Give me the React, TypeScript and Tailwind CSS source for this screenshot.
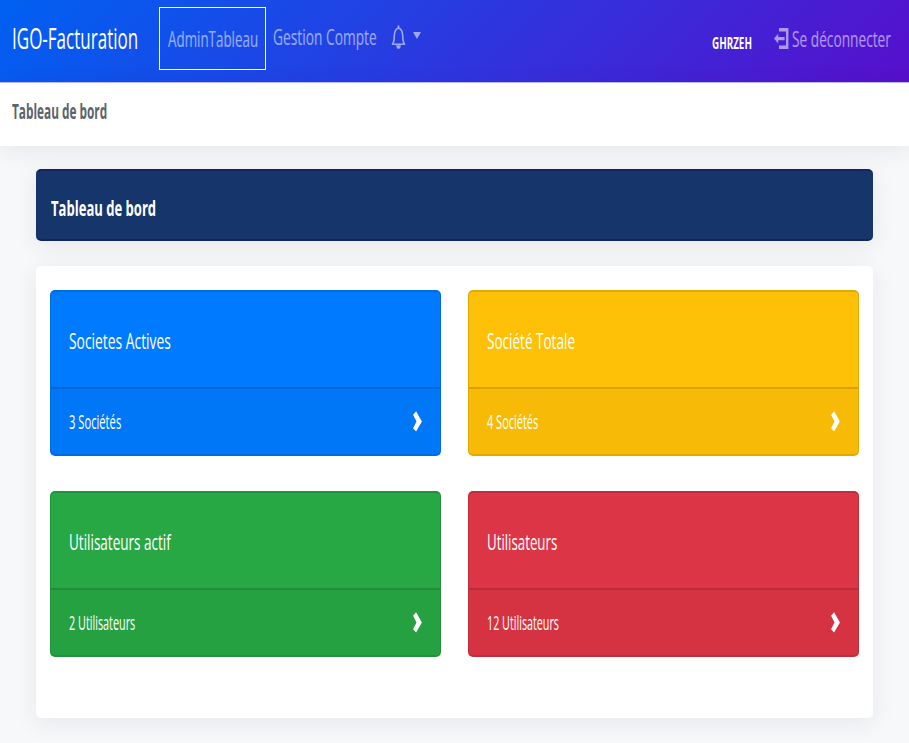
import { useLayoutEffect, useRef, type ReactNode } from 'react';

/* Single-line label whose glyphs are condensed to the width of its box. */
function Label({ className, children }: { className: string; children: ReactNode }) {
  const box = useRef<HTMLSpanElement>(null);
  const text = useRef<HTMLSpanElement>(null);

  useLayoutEffect(() => {
    if (!box.current || !text.current) return;
    const ratio = box.current.clientWidth / text.current.offsetWidth;
    text.current.style.transform = `scaleX(${ratio})`;
  }, [children]);

  return (
    <span ref={box} className={`block shrink-0 whitespace-nowrap leading-none ${className}`}>
      <span ref={text} className="inline-block origin-left align-top">
        {children}
      </span>
    </span>
  );
}

function BellIcon() {
  return (
    <svg className="ml-[14px] mt-[25px] h-6 w-[15px] shrink-0" viewBox="0 0 15 24" fill="none">
      <path
        d="M1.4 19.2C3.3 17.2 3.1 14.5 3.3 10.5C3.5 6.2 5 3.6 7.5 3.2C10 3.6 11.5 6.2 11.7 10.5C11.9 14.5 11.7 17.2 13.6 19.2Z"
        stroke="currentColor"
        strokeWidth="1.6"
        strokeLinejoin="round"
      />
      <path d="M7.5 0.5V3" stroke="currentColor" strokeWidth="1.8" />
      <path d="M5.2 20.2H9.8C9.6 22.7 8.8 23.8 7.5 23.8C6.2 23.8 5.4 22.7 5.2 20.2Z" fill="currentColor" />
    </svg>
  );
}

function LogoutIcon() {
  return (
    <svg className="mt-[27px] h-[22px] w-[15px] shrink-0" viewBox="0 0 15 22" fill="currentColor">
      <path d="M5 1H14.4V22H5V18.6H12V4.4H5Z" />
      <path d="M0 11.6L4.2 6.8V10H10.6V13.2H4.2V16.4Z" />
    </svg>
  );
}

function Chevron() {
  return (
    <svg className="mt-[22px] h-[21px] w-[9px] shrink-0" viewBox="0 0 9 21" fill="currentColor">
      <path d="M3.1 0.2L8.9 10.4L3.1 20.6L0.1 17.2L3.5 10.4L0.1 3.7Z" />
    </svg>
  );
}

type Stat = {
  title: string;
  titleWidth: string;
  detail: string;
  detailWidth: string;
  color: string;
};

const stats: Stat[] = [
  { title: 'Societes Actives', titleWidth: 'w-[102px]', detail: '3 Sociétés', detailWidth: 'w-[52px]', color: 'bg-[#007bff]' },
  { title: 'Société Totale', titleWidth: 'w-[88px]', detail: '4 Sociétés', detailWidth: 'w-[51px]', color: 'bg-[#ffc107]' },
  { title: 'Utilisateurs actif', titleWidth: 'w-[102px]', detail: '2 Utilisateurs', detailWidth: 'w-[66px]', color: 'bg-[#28a745]' },
  { title: 'Utilisateurs', titleWidth: 'w-[70px]', detail: '12 Utilisateurs', detailWidth: 'w-[72px]', color: 'bg-[#dc3545]' },
];

function StatCard({ title, titleWidth, detail, detailWidth, color }: Stat) {
  return (
    <div className={`h-[166px] overflow-hidden rounded-[5px] text-white ${color}`}>
      <div className="flex h-full flex-col rounded-[5px] border border-y-2 border-black/13">
        <div className="h-[95px] pl-[18px] pt-[37px]">
          <Label className={`text-[22px] ${titleWidth}`}>{title}</Label>
        </div>
        <div className="flex flex-1 justify-between border-t-2 border-black/13 bg-black/3 pl-[18px] pr-[18px]">
          <Label className={`mt-[23px] text-[20px] ${detailWidth}`}>{detail}</Label>
          <Chevron />
        </div>
      </div>
    </div>
  );
}

export default function App() {
  return (
    <div className="h-[743px] w-[909px] overflow-hidden bg-[#f7f8fa] font-['Open_Sans','Noto_Sans',sans-serif]">
      <header className="flex h-[82px] items-start bg-[linear-gradient(135deg,#0061f2_0%,#570fcc_100%)] pl-3 pr-[18px] text-white/55">
        <Label className="mt-6 w-[126px] text-[28.5px] text-white">IGO-Facturation</Label>
        <div className="ml-[21px] mt-[7px] h-[63px] w-[107px] border border-white pl-2 pt-[19px]">
          <Label className="w-[90px] text-[22px]">AdminTableau</Label>
        </div>
        <Label className="ml-[7px] mt-[26px] w-[104px] text-[22.5px]">Gestion Compte</Label>
        <BellIcon />
        <span className="ml-[7px] mt-8 h-[7px] w-2 bg-current [clip-path:polygon(0_0,100%_0,50%_100%)]" />
        <Label className="ml-auto mt-[35px] w-10 text-[16px] font-bold text-white">GHRZEH</Label>
        <div className="ml-[22px] flex">
          <LogoutIcon />
          <Label className="ml-[3px] mt-[27px] w-[99px] text-[22px]">Se déconnecter</Label>
        </div>
      </header>

      <div className="h-16 border-t border-[#b9b8f6] bg-white pl-3 pt-[16px] text-[#5c636a] shadow-[0_5px_24px_rgba(33,40,50,0.08)]">
        <Label className="w-[95px] text-[22px] font-bold">Tableau de bord</Label>
      </div>

      <main className="px-9 pt-[23px]">
        <div className="h-[72px] rounded-[5px] border-y-2 border-[#122463] bg-[#15356b] pl-[15px] pt-[25px] text-white shadow-[0_5px_24px_rgba(33,40,50,0.08)]">
          <Label className="w-[105px] text-[22px] font-bold">Tableau de bord</Label>
        </div>
        <div className="mt-[25px] grid h-[452px] grid-cols-2 content-start gap-x-[27px] gap-y-[35px] rounded-[5px] bg-white px-[14px] pt-6 shadow-[0_5px_24px_rgba(33,40,50,0.08)]">
          {stats.map((stat) => (
            <StatCard key={stat.title} {...stat} />
          ))}
        </div>
      </main>
    </div>
  );
}
